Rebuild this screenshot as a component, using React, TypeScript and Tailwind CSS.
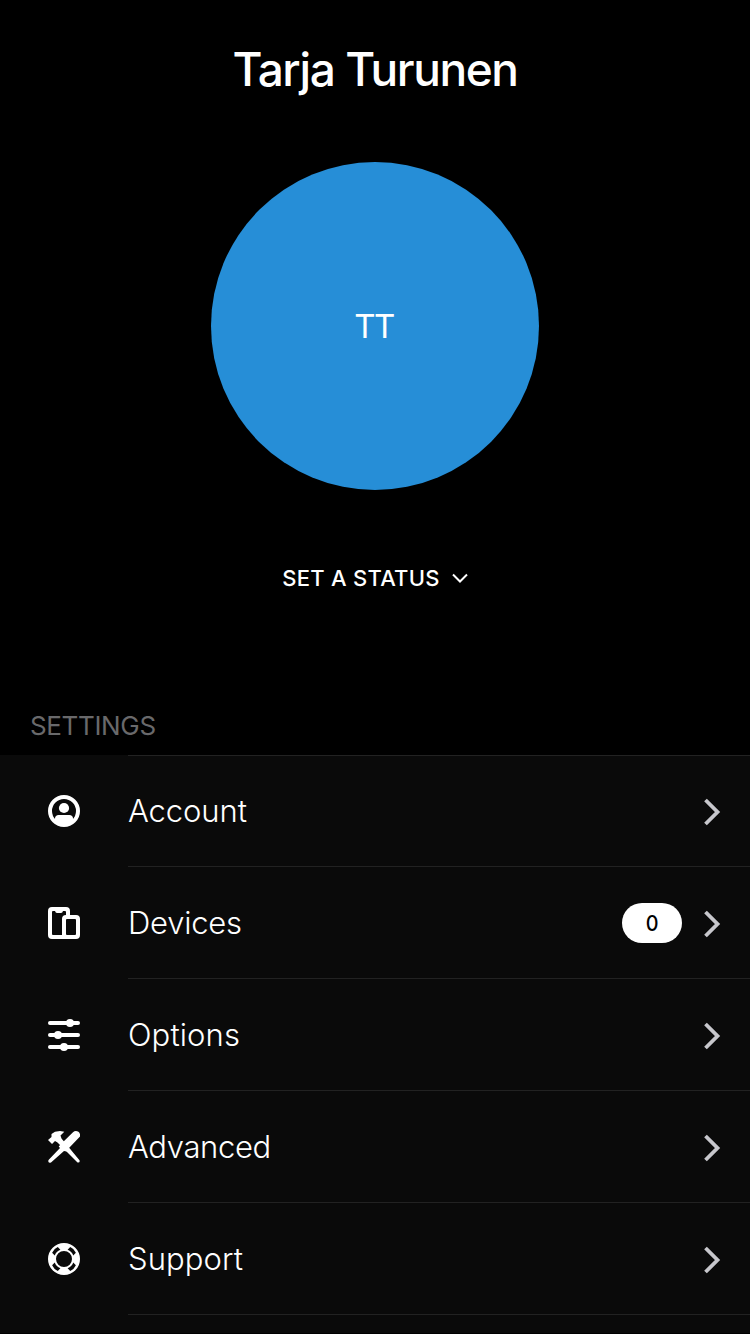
import type { ReactNode } from "react";

function AccountIcon() {
  return (
    <svg width="32" height="32" viewBox="0 0 32 32" fill="none">
      <circle cx="16" cy="16" r="14" stroke="white" strokeWidth="4" />
      <circle cx="16" cy="13" r="5.100" fill="white" />
      <path d="M7 27V23.500C7 21.200 8.500 20 10.500 20H21.500C23.500 20 25 21.200 25 23.500V27L16 31Z" fill="white" />
    </svg>
  );
}

function DevicesIcon() {
  return (
    <svg width="32" height="32" viewBox="0 0 32 32">
      <path
        fill="white"
        fillRule="evenodd"
        d="M4 0H18Q22 0 22 4V8H28Q32 8 32 12V28Q32 32 28 32H4Q0 32 0 28V4Q0 0 4 0ZM4 5V27Q4 28 5 28H14V12Q14 8 18 8V5Q18 4 17 4H15Q14.500 6 13 6H9Q7.500 6 7 4H5Q4 4 4 5ZM19 12Q18 12 18 13V27Q18 28 19 28H27Q28 28 28 27V13Q28 12 27 12Z"
      />
    </svg>
  );
}

function OptionsIcon() {
  return (
    <svg width="32" height="32" viewBox="0 0 32 32" fill="white">
      <rect y="2" width="32" height="4" rx="2" />
      <rect y="14" width="32" height="4" rx="2" />
      <rect y="26" width="32" height="4" rx="2" />
      <circle cx="22" cy="4" r="4" />
      <circle cx="10" cy="16" r="4" />
      <circle cx="16" cy="28" r="4" />
    </svg>
  );
}

function AdvancedIcon() {
  return (
    <svg width="32" height="32" viewBox="0 0 32 32" fill="white">
      <path d="M0 9L3.500 6V3L7 .7L12 0L16.300 .7L12.500 4.500L13.500 7.500L31.500 29.300Q32.300 32 29.500 31.500L9.500 11.500L7 10L4 13Z" />
      <path d="M25 1.200C28 -1.500 33 1 32 5.500L20.500 17.500L21 19L18.500 20.500L16 20L3 31.500Q-.5 32.500 .5 29L12 17L10.700 15.500L13 13Z" />
    </svg>
  );
}

function SupportIcon() {
  const slot = "M12 3.200Q16 1.600 20 3.200V6.900Q16 5 12 6.900Z";
  return (
    <svg width="32" height="32" viewBox="0 0 32 32" fill="none">
      <circle cx="16" cy="16" r="12" stroke="white" strokeWidth="8" />
      {[45, 135, 225, 315].map((angle) => (
        <path key={angle} d={slot} fill="#0a0a0a" transform={`rotate(${angle} 16 16)`} />
      ))}
    </svg>
  );
}

function Chevron() {
  return (
    <svg width="18" height="28" viewBox="0 0 18 28" fill="none" className="shrink-0">
      <path d="M2.500 2L14.500 14L2.500 26" stroke="#c7c7cc" strokeWidth="3.800" />
    </svg>
  );
}

type RowProps = { icon: ReactNode; label: string; spacing: string; badge?: string };

function Row({ icon, label, spacing, badge }: RowProps) {
  return (
    <button className="flex h-28 w-full items-stretch pl-12 text-left">
      <span className="flex w-20 items-center">{icon}</span>
      <span className="flex flex-1 items-center border-b border-[#222222] pr-[29px]">
        <span className={`flex-1 pt-px text-[31px] leading-10 font-light ${spacing}`}>{label}</span>
        {badge && (
          <span className="mr-[21px] flex h-10 w-[60px] items-center justify-center rounded-full bg-white pt-px text-[22px] font-medium text-black">
            <span className="scale-x-90">{badge}</span>
          </span>
        )}
        <span className="pt-0.5">
          <Chevron />
        </span>
      </span>
    </button>
  );
}

export default function App() {
  return (
    <main className="flex h-[1334px] w-[750px] flex-col overflow-hidden bg-black font-['Inter',sans-serif] text-white">
      <h1 className="mt-[39px] text-center text-[46px] leading-[60px] font-medium tracking-[-1.4px]">Tarja Turunen</h1>
      <div className="mx-auto mt-[63px] flex size-[328px] items-center justify-center rounded-full bg-[#268ed7] pt-0.5 pr-[2px] text-[33px] tracking-[-1.5px]">
        TT
      </div>
      <button className="mx-auto mt-[68px] flex h-10 items-center gap-[12px] text-[22px] font-medium tracking-[0.25px]">
        SET A STATUS
        <svg width="16" height="10" viewBox="0 0 16 10" fill="none">
          <path d="M1 1.500L8 8.500L15 1.500" stroke="white" strokeWidth="2" />
        </svg>
      </button>
      <h2 className="mt-[108px] h-[49px] pl-[30px] text-[26px] leading-10 tracking-[-0.35px] text-[#69696b]">SETTINGS</h2>
      <section className="h-[578px] overflow-hidden bg-[#0a0a0a]">
        <div className="ml-32 border-t border-[#222222]" />
        <div className="-mt-px">
          <Row icon={<AccountIcon />} label="Account" spacing="tracking-[-0.1px]" />
          <Row icon={<DevicesIcon />} label="Devices" spacing="tracking-[-0.25px]" badge="0" />
          <Row icon={<OptionsIcon />} label="Options" spacing="tracking-[0.1px]" />
          <Row icon={<AdvancedIcon />} label="Advanced" spacing="tracking-[-0.35px]" />
          <Row icon={<SupportIcon />} label="Support" spacing="tracking-[0.1px]" />
        </div>
      </section>
    </main>
  );
}
